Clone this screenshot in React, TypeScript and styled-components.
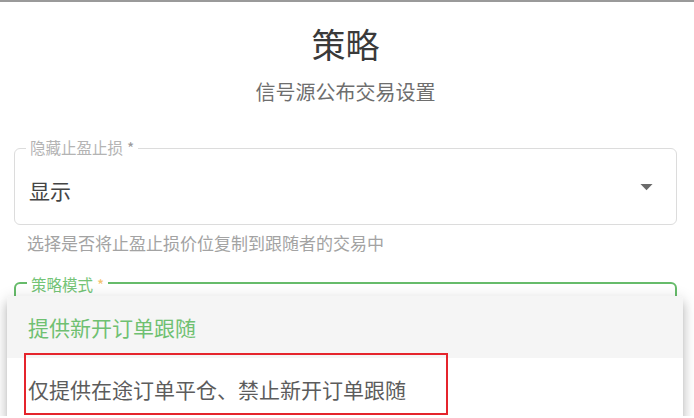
import React from "react";
import styled, { createGlobalStyle } from "styled-components";

const GlobalStyle = createGlobalStyle`
  html, body {
    margin: 0;
    padding: 0;
    background: #fff;
    overflow: hidden;
  }
  body {
    font-family: "Noto Sans CJK SC", "Noto Sans", sans-serif;
  }
`;

const green = "#66bb6a";

const Page = styled.div`
  border-top: 2px solid #9a9a9a;
  padding: 22px 17px 0 14px;
  height: 416px;
  box-sizing: border-box;
  display: flex;
  flex-direction: column;
  gap: 27px;
`;

const Header = styled.header`
  display: flex;
  flex-direction: column;
  align-items: center;
  gap: 14px;
  padding-bottom: 15px;
`;

const Title = styled.h1`
  margin: 0;
  font-size: 34px;
  line-height: 40px;
  font-weight: 400;
  color: #3a3a3a;
`;

const Subtitle = styled.p`
  margin: 0;
  font-size: 20px;
  line-height: 28px;
  color: #6e6e6e;
`;

const FieldGroup = styled.div`
  display: flex;
  flex-direction: column;
  gap: 6px;
`;

const Field = styled.div<{ $focused?: boolean }>`
  position: relative;
  height: 77px;
  box-sizing: border-box;
  border: ${(p) => (p.$focused ? `2px solid ${green}` : "1px solid #dcdcdc")};
  border-radius: 6px;
  display: flex;
  align-items: center;
  padding: 7px ${(p) => (p.$focused ? 13 : 14)}px 0;
`;

const Label = styled.span<{ $focused?: boolean }>`
  position: absolute;
  top: ${(p) => (p.$focused ? -9 : -11)}px;
  left: 11px;
  padding: 0 4px;
  background: #fff;
  font-size: 15.5px;
  line-height: 18px;
  color: ${(p) => (p.$focused ? "#74c476" : "#b4b4b4")};
  white-space: nowrap;
`;

const Star = styled.span<{ $focused?: boolean }>`
  margin-left: 4px;
  color: ${(p) => (p.$focused ? "#f5c36e" : "#9a9a9a")};
`;

const Value = styled.span`
  flex: 1;
  font-size: 21px;
  line-height: 28px;
  color: #444;
`;

const Arrow = styled.svg`
  width: 29px;
  height: 29px;
  margin-top: -7px;
  margin-right: 1px;
  fill: #6a6a6a;
`;

const Helper = styled.p`
  margin: 0 0 0 13px;
  font-size: 17px;
  line-height: 24px;
  color: #a3a3a3;
`;

const Menu = styled.ul`
  position: absolute;
  top: 12px;
  left: -9px;
  right: -8px;
  margin: 0;
  padding: 0;
  list-style: none;
  display: flex;
  flex-direction: column;
  background: #fff;
  border-radius: 4px;
  box-shadow: 0px 5px 5px -3px rgba(0, 0, 0, 0.2),
    0px 8px 10px 1px rgba(0, 0, 0, 0.14), 0px 3px 14px 2px rgba(0, 0, 0, 0.12);
`;

const Item = styled.li<{ $selected?: boolean }>`
  position: relative;
  height: 62px;
  display: flex;
  align-items: center;
  padding-left: 21px;
  font-size: 21px;
  color: ${(p) => (p.$selected ? "#6fc071" : "#5c5c5c")};
  background: ${(p) => (p.$selected ? "#f5f5f5" : "#fff")};
  &:first-child {
    border-radius: 4px 4px 0 0;
  }
`;

const Highlight = styled.div`
  position: absolute;
  top: -5px;
  left: 17px;
  width: 424px;
  height: 62px;
  box-sizing: border-box;
  border: 2px solid #e5242c;
  pointer-events: none;
`;

export default function App() {
  return (
    <>
      <GlobalStyle />
      <Page>
        <Header>
          <Title>策略</Title>
          <Subtitle>信号源公布交易设置</Subtitle>
        </Header>

        <FieldGroup>
          <Field>
            <Label>
              隐藏止盈止损<Star>*</Star>
            </Label>
            <Value>显示</Value>
            <Arrow viewBox="0 0 24 24">
              <path d="M7 10l5 5 5-5z" />
            </Arrow>
          </Field>
          <Helper>选择是否将止盈止损价位复制到跟随者的交易中</Helper>
        </FieldGroup>

        <FieldGroup>
          <Field $focused>
            <Label $focused>
              策略模式<Star $focused>*</Star>
            </Label>
            <Menu>
              <Item $selected>提供新开订单跟随</Item>
              <Item>
                仅提供在途订单平仓、禁止新开订单跟随
                <Highlight />
              </Item>
            </Menu>
          </Field>
        </FieldGroup>
      </Page>
    </>
  );
}
